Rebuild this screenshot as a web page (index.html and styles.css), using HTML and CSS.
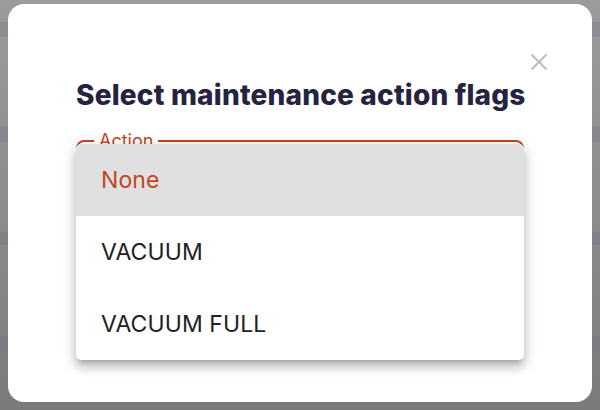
FILE: index.html
```html
<!DOCTYPE html>
<html lang="en">
<head>
    <meta charset="UTF-8">
    <meta name="viewport" content="width=device-width, initial-scale=1.0">
    <title>Maintenance action flags</title>
    <link rel="stylesheet" href="styles.css">
</head>
<body>
    <div class="backdrop">
        <!-- page behind the dialog, dimmed -->
        <div class="stripe s1"></div>
        <div class="stripe s2"></div>
        <div class="stripe s3"></div>
        <div class="stripe s4"></div>
    </div>

    <section class="dialog">
        <button class="close" aria-label="Close">
            <svg width="18" height="18" viewBox="0 0 18 18">
                <path d="M1.5 1.5 L16.5 16.5 M16.5 1.5 L1.5 16.5" stroke="#bcbcbc" stroke-width="2" fill="none"/>
            </svg>
        </button>

        <h2 class="title">Select maintenance action flags</h2>

        <div class="field">
            <fieldset class="outline">
                <legend>Action</legend>
            </fieldset>

            <!-- open select menu -->
            <ul class="menu">
                <li class="item selected">None</li>
                <li class="item">VACUUM</li>
                <li class="item">VACUUM FULL</li>
            </ul>
        </div>
    </section>
</body>
</html>
```

FILE: styles.css
```css
body {
    margin: 0;
    padding: 4px 8px 8px;
    height: 410px;
    box-sizing: border-box;
    background: linear-gradient(#9b9b9b, #8c8c8c 50%, #7b7b7b);
    font-family: "Inter", "Noto Sans", sans-serif;
    overflow: hidden;
}

.backdrop {
    position: absolute;
    inset: 0;
}

.stripe {
    position: absolute;
    left: 0;
    right: 0;
    height: 15px;
    background-color: rgba(110, 115, 135, 0.3);
}

.s1 { top: 22px; }
.s2 { top: 126px; height: 16px; }
.s3 { top: 232px; height: 13px; }
.s4 { top: 336px; height: 16px; }

.dialog {
    position: relative;
    background-color: white;
    border-radius: 16px;
    height: 398px;
    padding: 0 68px;
    box-sizing: border-box;
    display: flex;
    flex-direction: column;
}

.close {
    position: absolute;
    top: 49px;
    right: 44px;
    padding: 0;
    border: none;
    background: none;
    line-height: 0;
    cursor: pointer;
}

.title {
    margin: 72px 0 0;
    text-align: center;
    color: #24243f;
    font-size: 28px;
    font-weight: 800;
    letter-spacing: 0.2px;
    line-height: 38px;
    white-space: nowrap;
}

.field {
    position: relative;
    margin-top: 18px;
    height: 62px;
}

.outline {
    margin: 0;
    padding: 0 8px;
    height: 62px;
    box-sizing: border-box;
    border: 2px solid #c4461f;
    border-radius: 8px;
}

.outline legend {
    padding: 0 5px;
    margin-left: 8px;
    color: #c4461f;
    font-size: 18px;
    line-height: 18px;
}

.menu {
    position: absolute;
    top: 12px;
    left: 0;
    right: 0;
    margin: 0;
    padding: 0;
    list-style: none;
    background-color: white;
    border-radius: 5px;
    overflow: hidden;
    box-shadow: 0 5px 5px -3px rgba(0, 0, 0, 0.2), 0 8px 10px 1px rgba(0, 0, 0, 0.14), 0 3px 14px 2px rgba(0, 0, 0, 0.12);
}

.item {
    height: 72px;
    padding: 0 25px;
    display: flex;
    align-items: center;
    color: #222;
    font-size: 23px;
    letter-spacing: 0.1px;
}

.item.selected {
    background-color: #e0e0e0;
    color: #c4461f;
}
```
